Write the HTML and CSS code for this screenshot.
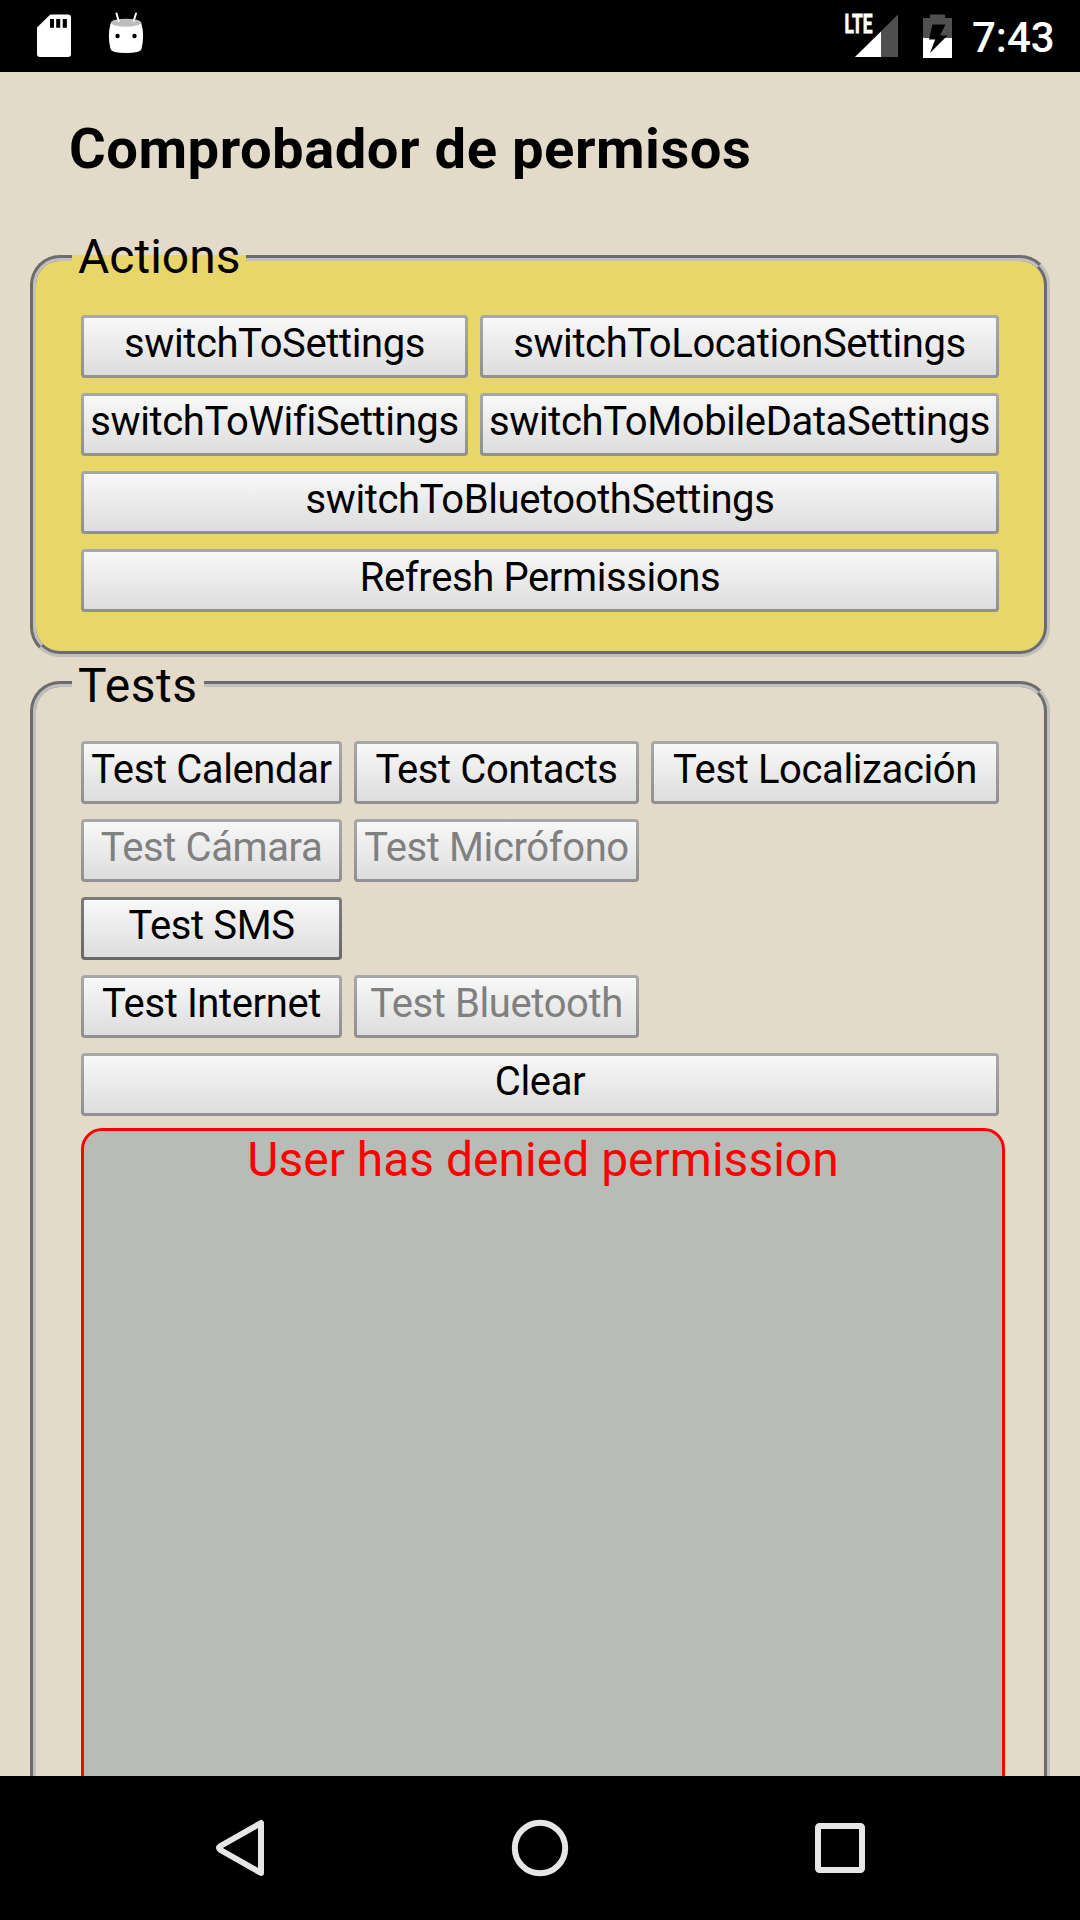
FILE: index.html
```html
<!DOCTYPE html>
<html lang="es">
<head>
<meta charset="utf-8">
<title>Comprobador de permisos</title>
<link rel="stylesheet" href="styles.css">
</head>
<body>
<header class="status-bar">
  <svg class="status-left" width="160" height="72" viewBox="0 0 160 72">
    <path fill="#fff" d="M50.300 14.500H68q3 0 3 3V54q0 3-3 3H40q-3 0-3-3V27.500z"/>
    <path fill="#000" d="M50 19h4v8.700h-4zM56.200 19h4v8.700h-4zM62.700 19h4.200v8.700h-4.200z"/>
    <path fill="#fff" d="M111 22q15 6 30 0q4 13 .500 27q-1 4-15.500 4t-15.500-4q-3.500-14 .500-27z"/>
    <ellipse cx="126" cy="22.700" rx="15" ry="4" fill="#bdbdbd"/>
    <path d="M116.500 13.500L118.700 21M136 13.500L133.700 21" stroke="#fff" stroke-width="2" stroke-linecap="round"/>
    <circle cx="117.500" cy="36" r="2.200"/><circle cx="134.500" cy="36" r="2.200"/>
  </svg>
  <div class="status-right">
    <svg width="120" height="72" viewBox="840 0 120 72">
      <path fill="#505050" d="M898 14.500V57H855z"/>
      <path fill="#fff" d="M881 31.500V57H855z"/>
      <text class="lte" x="844.500" y="33.300" textLength="28" lengthAdjust="spacingAndGlyphs">LTE</text>
      <path fill="#505050" d="M923 18h7v-3.500h15V18h7v20h-29z"/>
      <path fill="#fff" d="M923 38h29v20h-29z"/>
      <path fill="#000" d="M932.500 24.500H945.500L940 35.500H947.500L930 53L935.200 39.500H929z"/>
    </svg>
    <span class="clock">7:43</span>
  </div>
</header>
<main class="content">
  <h3 class="title">Comprobador de permisos</h3>
  <fieldset class="group actions">
    <legend>Actions</legend>
    <div class="grid actions-grid">
      <button>switchToSettings</button>
      <button>switchToLocationSettings</button>
      <button>switchToWifiSettings</button>
      <button>switchToMobileDataSettings</button>
      <button class="full">switchToBluetoothSettings</button>
      <button class="full">Refresh Permissions</button>
    </div>
  </fieldset>
  <fieldset class="group tests">
    <legend>Tests</legend>
    <div class="grid tests-grid">
      <button>Test Calendar</button>
      <button>Test Contacts</button>
      <button>Test Localización</button>
      <button disabled>Test Cámara</button>
      <button disabled>Test Micrófono</button>
      <button class="row-start pressed">Test SMS</button>
      <button class="row-start">Test Internet</button>
      <button disabled>Test Bluetooth</button>
      <button class="full">Clear</button>
    </div>
    <div class="output">User has denied permission</div>
  </fieldset>
</main>
<nav class="nav-bar">
  <svg width="1080" height="144" viewBox="0 1776 1080 144" fill="none" stroke="#e6e6e6" stroke-width="6">
    <path stroke-linejoin="round" d="M261 1823V1873L220.500 1850Q217.500 1848 220.500 1846z"/>
    <circle cx="540" cy="1848" r="25.200"/>
    <rect x="818" y="1826" width="44" height="44" rx="1.500"/>
  </svg>
</nav>
</body>
</html>
```
FILE: styles.css
```css
* { box-sizing: border-box; }

body {
  margin: 0;
  width: 1080px;
  height: 1920px;
  display: flex;
  flex-direction: column;
  overflow: hidden;
  background: #e3dac9;
  color: #000;
  font-family: Roboto, sans-serif;
}

.status-bar {
  flex: none;
  height: 72px;
  display: flex;
  justify-content: space-between;
  background: #000;
  color: #fff;
}

.status-right { display: flex; padding-right: 24px; }
.lte { font: bold 26px Roboto, sans-serif; fill: #fff; stroke: #fff; stroke-width: 0.8px; }
.clock { width: 96px; padding-left: 12px; font-size: 42px; font-weight: 500; line-height: 76px; white-space: nowrap; }

.content { flex: 1; min-height: 0; overflow: hidden; padding: 0 30px; }

.title {
  margin: 0;
  padding: 44px 0 0 39px;
  font-size: 56.16px;
  line-height: 66px;
  font-weight: bold;
  letter-spacing: 0.5px;
}

.group {
  margin: 0;
  min-width: 0;
  border: 6px groove #c0c0c0;
  border-radius: 30px;
  padding: 0 45px;
}

.group legend { height: 54px; margin-left: -9px; padding: 0 6px; font-size: 48px; line-height: 52px; }
.actions { height: 426px; margin-top: 49px; background: #e8d66b; }
.tests { height: 1300px; }
.tests legend { line-height: 58px; letter-spacing: 0.5px; }

.grid { display: grid; gap: 15px 12px; width: 918px; padding-top: 30px; }
.actions-grid { grid-template-columns: 387px 519px; }
.tests-grid { grid-template-columns: 261px 285px 348px; }
.full { grid-column: 1 / -1; }
.row-start { grid-column-start: 1; }

button {
  height: 63px;
  padding: 2px 0 8px;
  border: 3px solid transparent;
  border-radius: 4px;
  background: linear-gradient(#f8f8f8, #ddd) padding-box, linear-gradient(#a8a8a8, #909090) border-box;
  color: #000;
  font: 40px/47px Roboto, sans-serif;
  letter-spacing: -0.39px;
  white-space: nowrap;
}

button:disabled { color: #808080; }
button.pressed { background: linear-gradient(#f8f8f8, #ddd) padding-box, linear-gradient(#7c7c7c, #686868) border-box; }

.output {
  width: 924px;
  height: 900px;
  margin-top: 12px;
  border: 3px solid #f00;
  border-radius: 21px;
  background: #b8bcb6;
  color: #f00;
  font-size: 48px;
  line-height: 58px;
  text-align: center;
}

.nav-bar { flex: none; height: 144px; background: #000; }
.nav-bar svg { display: block; }
```
